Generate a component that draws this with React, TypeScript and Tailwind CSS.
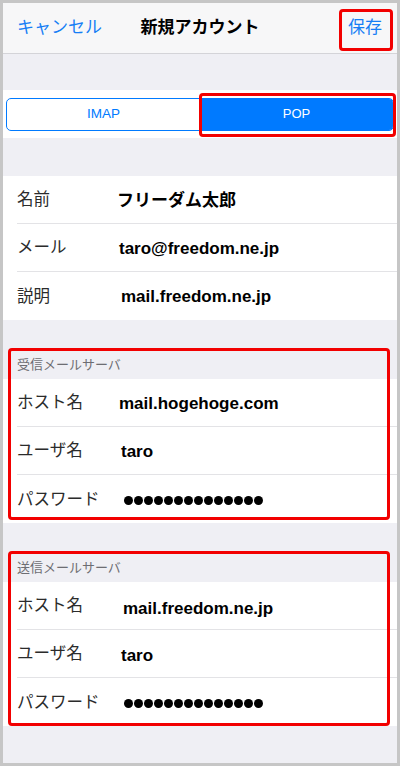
type Row = { label: string; value?: string; dots?: number; shift?: string }

const accountRows: Row[] = [
  { label: '名前', value: 'フリーダム太郎' },
  { label: 'メール', value: 'taro@freedom.ne.jp', shift: 'ml-[2px]' },
  { label: '説明', value: 'mail.freedom.ne.jp', shift: 'ml-[4px]' },
]

const incomingRows: Row[] = [
  { label: 'ホスト名', value: 'mail.hogehoge.com', shift: 'ml-[2px]' },
  { label: 'ユーザ名', value: 'taro', shift: 'ml-[4px]' },
  { label: 'パスワード', dots: 14, shift: 'ml-[7px]' },
]

const outgoingRows: Row[] = [
  { label: 'ホスト名', value: 'mail.freedom.ne.jp', shift: 'ml-[6px] mt-[5px]' },
  { label: 'ユーザ名', value: 'taro', shift: 'ml-[4px] mt-[3px]' },
  { label: 'パスワード', dots: 14, shift: 'ml-[7px]' },
]

function Dots({ count }: { count: number }) {
  return (
    <div className="flex items-center gap-[1px]">
      {Array.from({ length: count }).map((_, i) => (
        <span key={i} className="block w-[9px] h-[9px] rounded-full bg-black" />
      ))}
    </div>
  )
}

function Rows({ rows }: { rows: Row[] }) {
  return (
    <div className="bg-white">
      {rows.map((row, i) => (
        <div key={row.label} className="pl-[14px]">
          <div
            className={`flex items-center h-[48px] ${
              i < rows.length - 1 ? 'border-b border-[#e3e3e6]' : ''
            }`}
          >
            <span className="w-[100px] shrink-0 text-[16.5px] text-[#2b2b2b]">{row.label}</span>
            <div className={`${row.shift ?? ''} pt-[2px]`}>
              {row.dots ? (
                <Dots count={row.dots} />
              ) : (
                <span className="text-[17px] font-bold text-black">{row.value}</span>
              )}
            </div>
          </div>
        </div>
      ))}
    </div>
  )
}

function ServerSection({ title, rows, boxBottom }: { title: string; rows: Row[]; boxBottom: string }) {
  return (
    <div className="relative">
      <div className="h-[59px] flex items-end pl-[14px] pb-[5px]">
        <span className="text-[13px] text-[#6d6d72]">{title}</span>
      </div>
      <Rows rows={rows} />
      <div
        className={`absolute left-[5px] right-[7px] top-[28px] ${boxBottom} border-[3px] border-[#f20000] rounded-[4px] pointer-events-none`}
      />
    </div>
  )
}

export default function App() {
  return (
    <div
      className="w-[400px] h-[766px] border-[3px] border-[#c6c6c6] bg-[#efeff4] overflow-hidden flex flex-col"
      style={{ fontFamily: '"Liberation Sans", "Noto Sans CJK JP", sans-serif' }}
    >
      <header className="relative h-[51px] shrink-0 bg-[#f7f7f8] border-b border-[#d4d4d8] flex items-center justify-between px-[14px]">
        <button className="text-[17px] text-[#157ef5]">キャンセル</button>
        <h1 className="absolute left-0 right-0 text-center text-[17px] font-semibold text-black pointer-events-none">
          新規アカウント
        </h1>
        <button className="text-[17px] text-[#157ef5] mr-[1px]">保存</button>
        <div className="absolute left-[336px] right-[4px] top-[6px] bottom-[2px] border-[3px] border-[#f20000] rounded-[4px]" />
      </header>

      <div className="h-[36px] shrink-0" />

      <div className="relative bg-white h-[48px] shrink-0 flex items-center px-[3px]">
        <div className="flex w-full h-[33px] border border-[#007aff] rounded-[5px] overflow-hidden">
          <button className="flex-1 text-[13.5px] text-[#007aff] font-medium">IMAP</button>
          <button className="flex-1 bg-[#007aff] text-[13px] text-white font-medium">POP</button>
        </div>
        <div className="absolute left-[196px] right-[1px] top-[3px] bottom-[1px] border-[3px] border-[#f20000] rounded-[4px]" />
      </div>

      <div className="h-[38px] shrink-0" />

      <Rows rows={accountRows} />

      <ServerSection title="受信メールサーバ" rows={incomingRows} boxBottom="bottom-[3px]" />
      <ServerSection title="送信メールサーバ" rows={outgoingRows} boxBottom="bottom-[0px]" />
    </div>
  )
}
